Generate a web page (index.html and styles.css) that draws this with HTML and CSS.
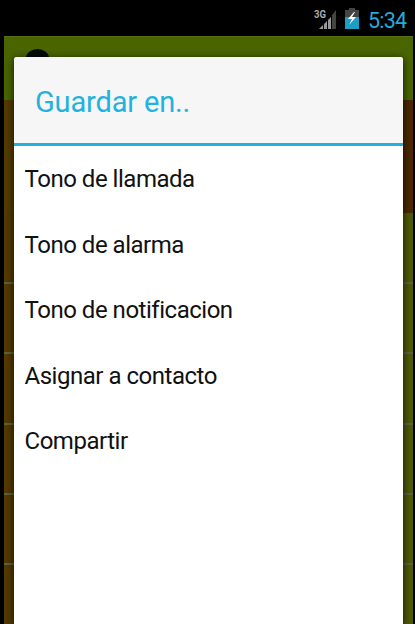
FILE: index.html
```html
<!DOCTYPE html>
<html lang="es">
    <head>
	<meta charset="UTF-8">
	<title>Guardar en..</title>
	<link rel="stylesheet" href="styles.css">
    </head>
    <body>
	<div class="estado">
	    <svg class="senal" width="24" height="24" viewBox="0 0 24 24">
		<text x="0" y="9.5" textLength="12" lengthAdjust="spacingAndGlyphs">3G</text>
		<path fill="#999" d="M5 21l4-4v4zM10 16l3-3v8h-3zM14 12l3-3v12h-3z"/>
		<path fill="#444" d="M18 7l4-5v19h-4z"/>
	    </svg>
	    <svg class="bateria" width="14" height="21" viewBox="0 0 14 21">
		<path fill="#444" d="M4 0h6v2h4v7H0V2h4z"/>
		<path fill="#1b9fc6" d="M0 9h14v12H0z"/>
		<path fill="#fff" d="M9 4L3 11h4l-3 6 7-8H7l3-5z"/>
	    </svg>
	    <span class="hora">5:34</span>
	</div>
	<div class="pantalla">
	    <div class="barra"><div class="logo"></div></div>
	    <div class="banner"></div>
	    <div class="lista">
		<div class="fila"></div>
		<div class="fila"></div>
		<div class="fila"></div>
		<div class="fila"></div>
		<div class="fila"></div>
		<div class="fila"></div>
	    </div>
	    <div class="dialogo">
		<h1>Guardar en..</h1>
		<ul>
		    <li>Tono de llamada</li>
		    <li>Tono de alarma</li>
		    <li>Tono de notificacion</li>
		    <li>Asignar a contacto</li>
		    <li>Compartir</li>
		</ul>
	    </div>
	</div>
    </body>
</html>
```
FILE: styles.css
```css
body {
    margin: 0;
    height: 624px;
    background: #000;
    font-family: Roboto, sans-serif;
    overflow: hidden;
}
.estado {
    display: flex;
    height: 36px;
    box-sizing: border-box;
    padding: 8px 9px 0 0;
    justify-content: flex-end;
    align-items: flex-start;
}
.senal {
    margin-right: 7px;
}
.senal text {
    font: bold 11px Roboto, sans-serif;
    fill: #aaa;
}
.bateria {
    margin-right: 9px;
}
.hora {
    font-size: 21.5px;
    line-height: 25px;
    letter-spacing: -0.8px;
    color: #25a9da;
    width: 38px;
    white-space: nowrap;
}
.pantalla {
    position: relative;
    height: 588px;
    margin: 0 2px 0 4px;
    overflow: hidden;
}
.barra {
    height: 64px;
    box-sizing: border-box;
    padding: 12px 0 0 22px;
    background: #4a6500;
    border-top: 1px solid #557010;
}
.logo {
    width: 23px;
    height: 18px;
    border-radius: 50%;
    background: #050a05;
}
.banner {
    height: 113px;
    background: linear-gradient(to right, #543c00, #4d2800);
}
.lista {
    padding-top: 1px;
    background: linear-gradient(to right, #543900, #4e5b06);
}
.fila {
    height: 70.2px;
    box-sizing: border-box;
    border-bottom: 2px solid #5c6340;
}
.dialogo {
    position: absolute;
    top: 21px;
    left: 10px;
    right: 10px;
    bottom: 0;
    background: #fff;
    border-radius: 3px 3px 0 0;
    box-shadow: 0 2px 9px rgba(0, 0, 0, 0.8);
    overflow: hidden;
}
h1 {
    margin: 0;
    height: 89px;
    box-sizing: border-box;
    padding-left: 21px;
    background: #f6f6f6;
    border-bottom: 3px solid #24b0dc;
    color: #22b2dd;
    font-size: 29px;
    font-weight: 400;
    line-height: 91px;
    letter-spacing: -0.15px;
}
ul {
    margin: 0;
    padding: 1px 0 0;
    list-style: none;
}
li {
    height: 65.6px;
    padding-left: 10.5px;
    font-size: 24px;
    line-height: 65.6px;
    letter-spacing: -0.48px;
    color: #111;
}
```
